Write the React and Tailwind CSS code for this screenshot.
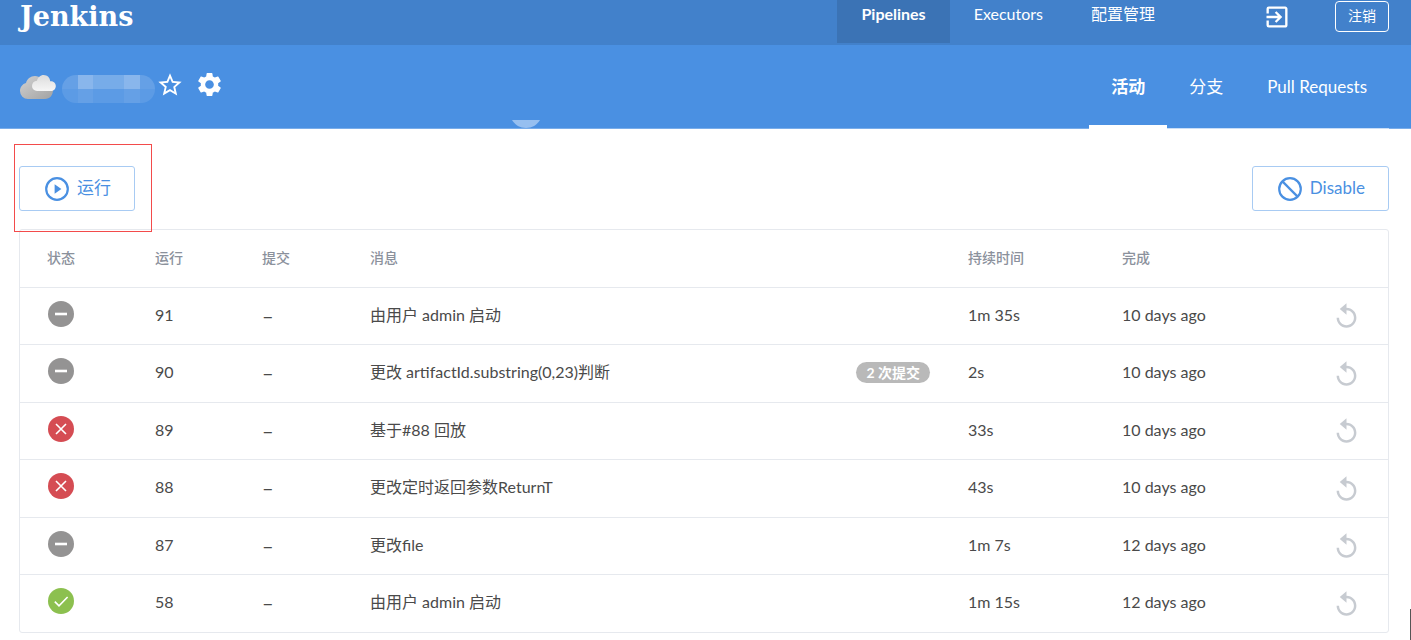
import React from "react";
import { MdExitToApp, MdSettings, MdStarBorder } from "react-icons/md";

const runs = [
  { id: 91, status: "aborted", message: "由用户 admin 启动", duration: "1m 35s", completed: "10 days ago" },
  { id: 90, status: "aborted", message: "更改 artifactId.substring(0,23)判断", commits: "2 次提交", duration: "2s", completed: "10 days ago" },
  { id: 89, status: "failure", message: "基于#88 回放", duration: "33s", completed: "10 days ago" },
  { id: 88, status: "failure", message: "更改定时返回参数ReturnT", duration: "43s", completed: "10 days ago" },
  { id: 87, status: "aborted", message: "更改file", duration: "1m 7s", completed: "12 days ago" },
  { id: 58, status: "success", message: "由用户 admin 启动", duration: "1m 15s", completed: "12 days ago" },
];

const StatusIcon = ({ status }) => (
  <svg viewBox="0 0 26 26" className="size-[26px]" role="img" aria-label={status}>
    {status === "aborted" && (
      <>
        <circle cx="13" cy="13" r="13" fill="#949393" />
        <path d="M7 13h12" stroke="#fff" strokeWidth="2.6" />
      </>
    )}
    {status === "failure" && (
      <>
        <circle cx="13" cy="13" r="13" fill="#d54c53" />
        <path d="M8 8l10 10M18 8L8 18" stroke="#fff" strokeWidth="1.6" />
      </>
    )}
    {status === "success" && (
      <>
        <circle cx="13" cy="13" r="13" fill="#8cc04f" />
        <path d="M6.8 13.6l4.2 4.2 8.6-8.8" fill="none" stroke="#fff" strokeWidth="1.6" />
      </>
    )}
  </svg>
);

const ReplayIcon = () => (
  <svg viewBox="0 0 24 24" className="size-[27px]" fill="#c7cbd1">
    <path d="M12 5V1L6 6.2 12 11.4V7.4c3.7 0 6.6 2.900 6.600 6.600s-2.900 6.600-6.600 6.600-6.600-2.900-6.600-6.600H3.200c0 4.900 3.900 8.800 8.800 8.800s8.800-3.900 8.800-8.800S16.900 5.200 12 5.200z" />
  </svg>
);

const CloudIcon = () => (
  <svg viewBox="0 0 36 24" className="h-6 w-9" role="img" aria-label="Cloudy">
    <defs>
      <linearGradient id="cloudBack" x1="0" y1="0" x2="1" y2="1">
        <stop offset="0" stopColor="#d2d2d2" />
        <stop offset="1" stopColor="#a2a2a2" />
      </linearGradient>
      <linearGradient id="cloudFront" x1="0" y1="0" x2="0" y2="1">
        <stop offset="0" stopColor="#dcdcdc" />
        <stop offset="1" stopColor="#f6f6f6" />
      </linearGradient>
    </defs>
    <path
      d="M8 24a8 8 0 0 1-8-8c0-4 2.500-7 6-8C7 4 10.500 1 15 1c5 0 9 4 9.500 8L33 15c0 5-3 9-8 9z"
      fill="url(#cloudBack)"
    />
    <path
      d="M17 16a5 5 0 0 1-5-5c0-3 2-5 5-5.200C17.800 2.500 20.300 0 23.700 0c3.600 0 6.300 2.800 6.500 6.300 3-.3 5.600 1.700 5.600 4.700s-2.300 5-5 5z"
      fill="url(#cloudFront)"
    />
  </svg>
);

const TopBar = () => (
  <header className="flex h-[45px] items-start justify-end bg-[#4281cb] pr-[22px]">
    <a href="#home" className="mr-auto pt-0.5 pl-5 font-['DejaVu_Serif',serif] text-[27px] leading-[30px] font-bold">
      Jenkins
    </a>
    <nav className="flex leading-7">
      <a href="#pipelines" className="h-[43px] bg-[#3b73b5] px-6 font-bold">
        Pipelines
      </a>
      <a href="#executors" className="h-[43px] px-6">
        Executors
      </a>
      <a href="#admin" className="h-[43px] px-6">
        配置管理
      </a>
    </nav>
    <a href="#classic" aria-label="Go to classic" className="mt-[3px] ml-[84px]">
      <MdExitToApp className="size-7" />
    </a>
    <button className="mt-px ml-11 h-[31px] rounded-sm border border-white px-3 pb-0.5 text-sm">
      注销
    </button>
  </header>
);

const PipelineHeader = () => (
  <div className="relative flex h-[84px] items-center border-b border-[#79adea] bg-[#4a90e2] pr-[22px] pl-5">
    <CloudIcon />
    {/* Hidden pipeline name */}
    <div className="mt-1 ml-[6px] grid h-7 w-[93px] grid-cols-6 grid-rows-2 overflow-hidden rounded-full">
      <div className="bg-white/15" />
      <div className="bg-white/35" />
      <div className="bg-white/25" />
      <div className="bg-white/25" />
      <div className="bg-white/35" />
      <div className="bg-white/15" />
      <div className="bg-white/10" />
      <div className="bg-white/15" />
      <div className="bg-white/10" />
      <div className="bg-white/10" />
      <div className="bg-white/15" />
      <div className="bg-white/10" />
    </div>
    <button aria-label="Favorite" className="mb-1 ml-px">
      <MdStarBorder className="size-7" />
    </button>
    <button aria-label="Settings" className="mb-1 ml-[11px]">
      <MdSettings className="size-[29px]" />
    </button>
    <nav className="-mb-px ml-auto flex self-stretch text-[17px] leading-[84px]">
      <a href="#activity" className="border-b-4 border-white px-[22px] font-bold">
        活动
      </a>
      <a href="#branches" className="border-b border-white/60 px-[22px]">
        分支
      </a>
      <a href="#pr" className="border-b border-white/60 px-[22px]">
        Pull Requests
      </a>
    </nav>
    <svg viewBox="0 0 28 8" className="absolute bottom-0 left-[512px] h-2 w-7">
      <path d="M0 0h28c-3 5-8 8-14 8S3 5 0 0z" fill="#96bff0" />
    </svg>
  </div>
);

const ActionButton = ({ icon, children }) => (
  <button className="flex h-[45px] items-center gap-2 rounded-[3px] border border-[#a8cbf3] pr-[23px] pl-[25px] text-[17px] text-[#4a90e2]">
    {icon}
    <span className="pb-0.5">{children}</span>
  </button>
);

const App = () => {
  return (
    <div className="relative min-h-screen bg-white font-['Lato','Noto_Sans_CJK_SC',sans-serif] text-base text-[#4a4a4a]">
      <div className="text-white">
        <TopBar />
        <PipelineHeader />
      </div>

      <main className="pt-[37px] pr-[22px] pb-2 pl-[19px]">
        <div className="mb-[18px] flex justify-between">
          <div className="relative">
            <ActionButton
              icon={
                <svg viewBox="0 0 24 24" className="size-6">
                  <circle cx="12" cy="12" r="10.8" fill="none" stroke="#4a90e2" strokeWidth="2.2" />
                  <path d="M9.6 7.2v9.6l6.8-4.8z" fill="#4a90e2" />
                </svg>
              }
            >
              运行
            </ActionButton>
            <div className="pointer-events-none absolute -top-[22px] -left-[5px] h-[88px] w-[138px] border border-[#f34b4b]" />
          </div>
          <ActionButton
            icon={
              <svg viewBox="0 0 24 24" className="size-6" fill="none" stroke="#4a90e2" strokeWidth="2.2">
                <circle cx="12" cy="12" r="10.8" />
                <path d="M4.4 4.4l15.2 15.2" />
              </svg>
            }
          >
            Disable
          </ActionButton>
        </div>

        <div className="rounded-[3px] border border-[#e6e9ee]">
          <table className="w-full table-fixed text-left">
            <colgroup>
              <col className="w-[108px]" />
              <col className="w-[107px]" />
              <col className="w-[108px]" />
              <col />
              <col className="w-[154px]" />
              <col className="w-[214px]" />
              <col className="w-[79px]" />
            </colgroup>
            <thead>
              <tr className="h-[57px] text-sm text-[#8b919c]">
                <th className="pl-[27px] font-medium">状态</th>
                <th className="pl-[27px] font-medium">运行</th>
                <th className="pl-[27px] font-medium">提交</th>
                <th className="pl-[27px] font-medium">消息</th>
                <th className="pl-[27px] font-medium">持续时间</th>
                <th className="pl-[27px] font-medium">完成</th>
                <th />
              </tr>
            </thead>
            <tbody>
              {runs.map((run) => (
                <tr key={run.id} className="h-[57px] border-t border-[#e6e9ee] even:h-[58px]">
                  <td className="pb-1 pl-7">
                    <StatusIcon status={run.status} />
                  </td>
                  <td className="pb-0.5 pl-[27px]">{run.id}</td>
                  <td className="pb-0.5 pl-[27px] text-xl leading-6">–</td>
                  <td className="pr-[11px] pb-0.5 pl-[27px]">
                    <div className="flex items-center justify-between">
                      {run.message}
                      {run.commits && (
                        <span className="rounded-full bg-[#b9b9b9] px-[10px] text-sm leading-[21px] font-bold text-white">
                          {run.commits}
                        </span>
                      )}
                    </div>
                  </td>
                  <td className="pb-0.5 pl-[27px]">{run.duration}</td>
                  <td className="pb-0.5 pl-[27px]">{run.completed}</td>
                  <td>
                    <button aria-label="Replay" className="ml-6 block">
                      <ReplayIcon />
                    </button>
                  </td>
                </tr>
              ))}
            </tbody>
          </table>
        </div>
      </main>

      <div className="absolute right-0 bottom-0 h-8 w-px bg-[#555]" />
    </div>
  );
};

export default App;
